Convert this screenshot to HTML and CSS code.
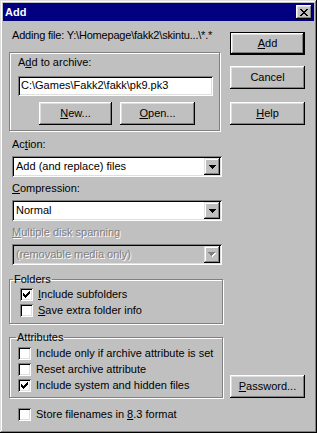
FILE: index.html
```html
<!DOCTYPE html>
<html>
<head>
<meta charset="utf-8">
<title>Add</title>
<link rel="stylesheet" href="styles.css">
</head>
<body>
<div class="window">
  <div class="titlebar">
    <span class="title">Add</span>
    <span class="close"><svg width="8" height="7" viewBox="0 0 8 7" shape-rendering="crispEdges"><path fill="#000" d="M0 0h2v1H0zM6 0h2v1H6zM1 1h2v1H1zM5 1h2v1H5zM2 2h4v1H2zM3 3h2v1H3zM2 4h4v1H2zM1 5h2v1H1zM5 5h2v1H5zM0 6h2v1H0zM6 6h2v1H6z"/></svg></span>
  </div>
  <div class="content">
    <div class="left">
      <div class="line adding">Adding file: Y:\Homepage\fakk2\skintu...\*.*</div>
      <div class="group archive">
        <div class="line">A<u>d</u>d to archive:</div>
        <div class="edit">C:\Games\Fakk2\fakk\pk9.pk3</div>
        <div class="btnrow">
          <div class="btn new"><u>N</u>ew...</div>
          <div class="btn open"><u>O</u>pen...</div>
        </div>
      </div>
      <div class="line lbl first">Ac<u>t</u>ion:</div>
      <div class="combo">
        <span class="val">Add (and replace) files</span>
        <span class="arrow"><svg width="7" height="4" viewBox="0 0 7 4" shape-rendering="crispEdges"><path fill="#000" d="M0 0h7v1H0zM1 1h5v1H1zM2 2h3v1H2zM3 3h1v1H3z"/></svg></span>
      </div>
      <div class="line lbl"><u>C</u>ompression:</div>
      <div class="combo">
        <span class="val">Normal</span>
        <span class="arrow"><svg width="7" height="4" viewBox="0 0 7 4" shape-rendering="crispEdges"><path fill="#000" d="M0 0h7v1H0zM1 1h5v1H1zM2 2h3v1H2zM3 3h1v1H3z"/></svg></span>
      </div>
      <div class="line lbl disabled"><u>M</u>ultiple disk spanning</div>
      <div class="combo off">
        <span class="val disabled">(removable media only)</span>
        <span class="arrow"><svg width="8" height="5" viewBox="0 0 8 5" shape-rendering="crispEdges"><path fill="#fff" transform="translate(1 1)" d="M0 0h7v1H0zM1 1h5v1H1zM2 2h3v1H2zM3 3h1v1H3z"/><path fill="#808080" d="M0 0h7v1H0zM1 1h5v1H1zM2 2h3v1H2zM3 3h1v1H3z"/></svg></span>
      </div>
      <fieldset class="fs folders">
        <legend>Folders</legend>
        <div class="row"><span class="cb"><svg width="7" height="7" viewBox="0 0 7 7" shape-rendering="crispEdges"><path fill="#000" d="M6 0h1v1H6zM5 1h2v1H5zM0 2h1v1H0zM4 2h3v1H4zM0 3h2v1H0zM3 3h3v1H3zM0 4h5v1H0zM1 5h3v1H1zM2 6h1v1H2z"/></svg></span><span class="txt"><u>I</u>nclude subfolders</span></div>
        <div class="row"><span class="cb"></span><span class="txt"><u>S</u>ave extra folder info</span></div>
      </fieldset>
      <fieldset class="fs attrs">
        <legend>Attributes</legend>
        <div class="row"><span class="cb"></span><span class="txt">Include only if archive attribute is set</span></div>
        <div class="row"><span class="cb"></span><span class="txt">Reset archive attribute</span></div>
        <div class="row"><span class="cb"><svg width="7" height="7" viewBox="0 0 7 7" shape-rendering="crispEdges"><path fill="#000" d="M6 0h1v1H6zM5 1h2v1H5zM0 2h1v1H0zM4 2h3v1H4zM0 3h2v1H0zM3 3h3v1H3zM0 4h5v1H0zM1 5h3v1H1zM2 6h1v1H2z"/></svg></span><span class="txt">Include system and hidden files</span></div>
      </fieldset>
      <div class="row store"><span class="cb"></span><span class="txt">Store filenames in <u>8</u>.3 format</span></div>
    </div>
    <div class="right">
      <div class="btn default add"><u>A</u>dd</div>
      <div class="btn cancel">Cancel</div>
      <div class="btn help"><u>H</u>elp</div>
      <div class="btn password"><u>P</u>assword...</div>
    </div>
  </div>
</div>
</body>
</html>
```
FILE: styles.css
```css
* { box-sizing: border-box; }
html, body { margin: 0; padding: 0; }
body {
  width: 317px;
  height: 433px;
  overflow: hidden;
  background: #c0c0c0;
  color: #000;
  font-family: "Liberation Sans", Arial, sans-serif;
  font-size: 11px;
}
u { text-decoration: underline; text-underline-offset: 1px; }

.window {
  width: 317px;
  height: 433px;
  padding: 3px;
  background: #c0c0c0;
  display: flex;
  flex-direction: column;
  box-shadow: inset -1px -1px #000, inset 1px 1px #dfdfdf, inset -2px -2px #808080, inset 2px 2px #fff;
}

.titlebar {
  flex: none;
  height: 18px;
  background: #000080;
  display: flex;
  align-items: center;
  justify-content: space-between;
  padding: 0 2px;
}
.title { color: #fff; font-weight: bold; font-size: 11px; line-height: 13px; }
.close {
  width: 16px;
  height: 14px;
  background: #c0c0c0;
  display: flex;
  align-items: center;
  justify-content: center;
  box-shadow: inset -1px -1px #000, inset 1px 1px #fff, inset -2px -2px #808080, inset 2px 2px #dfdfdf;
}
.close svg { display: block; }

.content { flex: 1; display: flex; padding-left: 6px; }
.left { width: 214px; min-width: 0; flex: none; display: flex; flex-direction: column; }
.right { width: 75px; flex: none; margin-left: 7px; display: flex; flex-direction: column; padding-bottom: 32px; }

.line { height: 13px; line-height: 13px; white-space: nowrap; }
.adding { margin-top: 8px; padding-left: 3px; letter-spacing: -0.2px; }

.group {
  border: 1px solid #808080;
  box-shadow: inset 1px 1px #fff, 1px 1px #fff;
}
.archive { width: 211px; margin-top: 10px; padding: 3px 0 5px 8px; }
.edit {
  margin-top: 7px;
  width: 195px;
  height: 20px;
  padding: 2px 2px 2px 3px;
  line-height: 15px;
  background: #fff;
  white-space: nowrap;
  box-shadow: inset 1px 1px #808080, inset -1px -1px #fff, inset 2px 2px #000, inset -2px -2px #dfdfdf;
}
.btnrow { display: flex; gap: 8px; margin: 6px 0 0 21px; }

.btn {
  height: 23px;
  width: 75px;
  flex: none;
  display: flex;
  align-items: center;
  justify-content: center;
  line-height: 13px;
  background: #c0c0c0;
  white-space: nowrap;
  box-shadow: inset -1px -1px #000, inset 1px 1px #fff, inset -2px -2px #808080, inset 2px 2px #dfdfdf;
}
.btn.new { width: 73px; }
.btn.default {
  box-shadow: inset 0 0 0 1px #000, inset -2px -2px #000, inset 2px 2px #fff, inset -3px -3px #808080, inset 3px 3px #dfdfdf;
}
.add { margin-top: 11px; }
.cancel { margin-top: 11px; }
.help { margin-top: 13px; }
.password { margin-top: auto; }

.lbl { margin-top: 5px; padding-left: 3px; }
.lbl.first { margin-top: 7px; }
.disabled { color: #808080; text-shadow: 1px 1px 0 #fff; }

.combo {
  margin: 5px 0 0 3px;
  width: 210px;
  height: 21px;
  padding: 2px;
  display: flex;
  background: #fff;
  box-shadow: inset 1px 1px #808080, inset -1px -1px #fff, inset 2px 2px #000, inset -2px -2px #dfdfdf;
}
.combo.off { background: #c0c0c0; }
.combo .val { flex: 1; line-height: 17px; padding-left: 2px; white-space: nowrap; overflow: hidden; }
.combo .arrow {
  width: 16px;
  height: 17px;
  flex: none;
  display: flex;
  align-items: center;
  justify-content: center;
  background: #c0c0c0;
  box-shadow: inset -1px -1px #000, inset 1px 1px #dfdfdf, inset -2px -2px #808080, inset 2px 2px #fff;
}
.combo .arrow svg { display: block; }

.fs {
  margin: 0;
  min-width: 0;
  border: 1px solid #808080;
  box-shadow: inset 1px 1px #fff, 1px 1px #fff;
}
.fs legend { padding: 0 1px; line-height: 13px; height: 13px; }
.folders { margin-top: 8px; width: 214px; padding: 0 0 5px 10px; }
.folders legend { margin-left: -7px; }
.attrs { margin-top: 7px; width: 214px; padding: 1px 0 4px 8px; }
.attrs legend { margin-left: -2px; }

.row { display: flex; align-items: center; height: 16px; white-space: nowrap; }
.cb {
  width: 13px;
  height: 13px;
  flex: none;
  padding: 3px;
  background: #fff;
  box-shadow: inset 1px 1px #808080, inset -1px -1px #fff, inset 2px 2px #000, inset -2px -2px #dfdfdf;
}
.cb svg { display: block; }
.txt { margin-left: 5px; line-height: 13px; }
.store { margin-top: 8px; padding-left: 9px; }
```
